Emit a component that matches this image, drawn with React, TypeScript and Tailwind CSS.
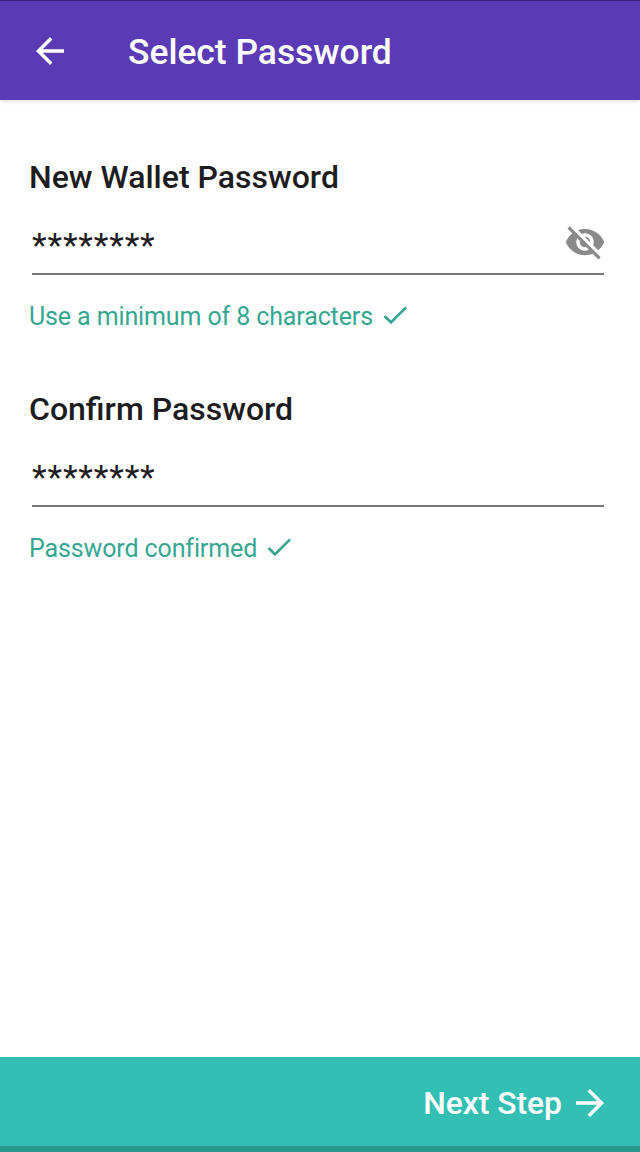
import React from "react";
import { MdArrowBack, MdArrowForward, MdCheck, MdVisibilityOff } from "react-icons/md";

type FieldProps = {
  label: string;
  hint: string;
  toggle?: boolean;
};

const PasswordField = ({ label, hint, toggle }: FieldProps) => {
  return (
    <section className="h-[232px]">
      <h2 className="h-10 text-[32px] leading-10 font-medium whitespace-nowrap">{label}</h2>
      <div className="ml-[3px] mr-[7px] mt-1 h-[74px] border-b-2 border-[#7b7a7b] flex justify-between">
        <span className="mt-6 h-10 text-[34px] leading-10 tracking-[0.8px]">********</span>
        {toggle && <MdVisibilityOff className="mt-5 -mr-[2px] size-[42px] text-[#8b8a8b]" />}
      </div>
      <div className="mt-[26px] flex items-start h-8 text-[#35a791]">
        <p className="text-[25px] leading-8 tracking-[-0.12px] whitespace-nowrap">{hint}</p>
        <MdCheck className="ml-[6px] -mt-[2px] size-8" />
      </div>
    </section>
  );
};

const App = () => {
  return (
    <div className="w-full h-screen flex flex-col bg-white text-[#1d1d1f] font-['Roboto',sans-serif]">
      {/* top bar */}
      <header className="h-[100px] shrink-0 flex items-center bg-[#5b3ab5] border-t border-[#35207c] text-white shadow-[0_1px_5px_rgba(0,0,0,0.15)]">
        <MdArrowBack className="ml-[29px] size-[42px]" />
        <h1 className="ml-[57px] mt-[3px] text-[35.4px] leading-10 font-medium whitespace-nowrap">Select Password</h1>
      </header>

      <main className="flex-1 pt-[57px] pl-[29px] pr-[29px]">
        <PasswordField label="New Wallet Password" hint="Use a minimum of 8 characters" toggle />
        <PasswordField label="Confirm Password" hint="Password confirmed" />
      </main>

      {/* bottom action */}
      <button className="h-[95px] shrink-0 flex items-center justify-end pt-[2px] pr-[29px] bg-[#34bfb5] border-b-[6px] border-[#2a988e] text-white">
        <span className="text-[31.8px] leading-10 font-medium whitespace-nowrap">Next Step</span>
        <MdArrowForward className="ml-[7px] size-[42px]" />
      </button>
    </div>
  );
};

export default App;
